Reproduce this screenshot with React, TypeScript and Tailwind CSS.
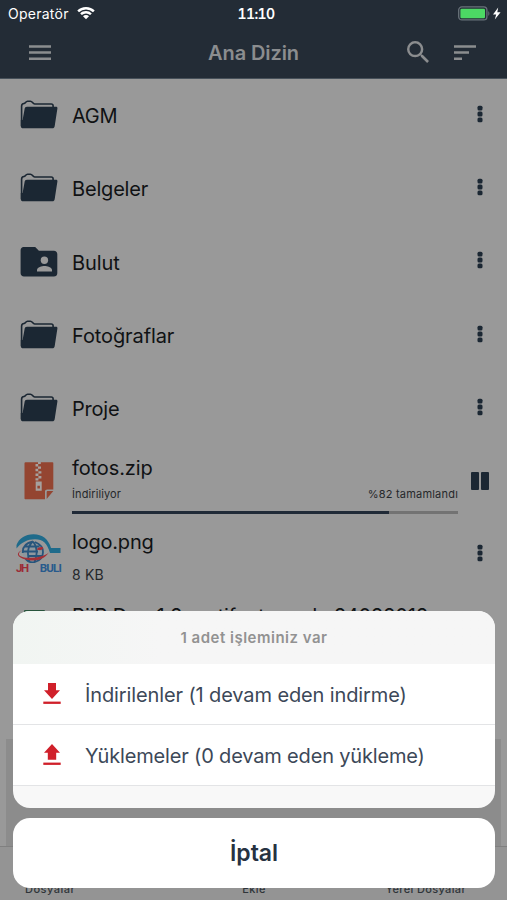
import type { ReactNode } from 'react';

type Folder = { name: string; shared?: boolean; tracking: string };

const FOLDERS: Folder[] = [
  { name: 'AGM', tracking: 'tracking-[-0.3px]' },
  { name: 'Belgeler', tracking: 'tracking-[-0.18px]' },
  { name: 'Bulut', shared: true, tracking: 'tracking-[-0.1px]' },
  { name: 'Fotoğraflar', tracking: 'tracking-[-0.1px]' },
  { name: 'Proje', tracking: 'tracking-[-0.2px]' },
];

function WifiIcon() {
  return (
    <svg width="18" height="13" viewBox="0 0 18 13" fill="#fff">
      <path d="M9 0C5.500 0 2.400 1.300.3 3.400L2 5.200A10 10 0 0 1 9 2.400a10 10 0 0 1 7 2.800l1.700-1.800C15.600 1.300 12.500 0 9 0Z" />
      <path d="M9 4.100c-2.300 0-4.300.8-5.800 2.300l1.700 1.700A6 6 0 0 1 9 6.500a6 6 0 0 1 4.100 1.600l1.700-1.700A8.300 8.300 0 0 0 9 4.100Z" />
      <path d="M9 8.100c-1.200 0-2.200.4-3 1.100l3 3.100 3-3.100c-.8-.7-1.800-1.100-3-1.100Z" />
    </svg>
  );
}

function BatteryIcon() {
  return (
    <svg width="44" height="16" viewBox="0 0 44 16">
      <rect x="0.700" y="0.900" width="28.200" height="13" rx="3.200" fill="none" stroke="#69727a" strokeWidth="1.300" />
      <rect x="2.400" y="2.700" width="24.600" height="9.500" rx="1.300" fill="#4cd964" />
      <path d="M30.300 5.200c1.400.4 1.400 4 0 4.500Z" fill="#69727a" />
      <path d="m40.200 1.500-5.200 7h3.200L36.800 13.500l5.800-7.300h-3.300Z" fill="#fff" />
    </svg>
  );
}

function FolderIcon() {
  return (
    <svg width="38" height="30" viewBox="0 0 38 30">
      <path
        d="M1.600 26V6.200c0-1.500.9-2.500 2.400-2.700C5.500 3.400 5.600 1.200 7.500 1.200h3c2 0 2.100 2.800 4.200 2.800h16.600c1.200 0 1.800.6 1.800 1.700V8"
        fill="none"
        stroke="#1b2733"
        strokeWidth="1.600"
      />
      <path d="M4.600 9c.2-1.500 1-2.200 2.300-2.200h29c1.200 0 1.700.6 1.500 1.700l-2.700 17.500c-.2 1.600-1 2.300-2.500 2.300H3.300C1.600 28.300.8 27.400.8 26V20h1.800Z" fill="#1b2733" />
    </svg>
  );
}

function SharedFolderIcon() {
  return (
    <svg width="38" height="30" viewBox="0 0 38 30">
      <path d="M3.500 0h11.700l3.700 3.700h15c2 0 3.400 1.400 3.400 3.300v19.300c0 2-1.400 3.300-3.400 3.300H4c-2 0-3.400-1.400-3.400-3.300V3.300C.6 1.400 1.900 0 3.500 0Z" fill="#1b2733" />
      <circle cx="24.400" cy="13.200" r="3.700" fill="#999" />
      <path d="M17 24.400v-1.600c0-2.600 5-3.900 7.500-3.900s7.500 1.300 7.500 3.900v1.600Z" fill="#999" />
    </svg>
  );
}

function ZipIcon() {
  return (
    <svg width="30" height="38" viewBox="0 0 30 38">
      <path d="M1.500.3h27c.5 0 .8.3.8.8v26.400h-6c-1.500 0-2.300.8-2.300 2.300v7.500H1.500c-.6 0-1-.3-1-1V1.200c0-.6.4-.9 1-.9Z" fill="#944531" />
      <path d="M22.700 37v-6.600c0-1 .3-1.300 1.300-1.300h5.300Z" fill="#944531" />
      <path
        d="M14 0h2.800v2H14ZM11.500 2h2.700v2.400h-2.700ZM14 4.400h3v2.400h-3ZM11.500 6.800h2.700v2.400h-2.700ZM14.400 9.200h3v2.400h-3ZM11.500 11.600h2.900V14h-2.900ZM14.400 14h3v2.400h-3ZM11.500 16.300h2.900v2.200h-2.900Z"
        fill="#a5a19f"
      />
      <path d="M11.700 19.500h6v9.300h-6ZM13.400 23.800v2.800h2.500v-2.800Z" fill="#a5a19f" fillRule="evenodd" />
    </svg>
  );
}

function LogoThumb() {
  return (
    <div className="h-[42px] w-[45px]">
      <svg width="45" height="29" viewBox="0 0 45 29">
        <path d="M.5 14.500V11C3 4.500 9 .3 17.500.3c9 0 15 5 17.500 13.700h9.500v5H34C31.500 9.500 27 5.200 19 5.200 11.500 5.200 5 8.500.5 14.500Z" fill="#1f6b8b" />
        <circle cx="17" cy="18" r="10.500" fill="#8e979e" />
        <g fill="none" stroke="#27557c" strokeWidth="1.800">
          <path d="M17 7.500C9 9 6.500 14 6.800 19M17 7.500c-5 4-6.500 12-3.500 20M17 7.500c4 4.500 5 13 1.500 20.500M19 8c5 2 8 6 8 10 0 4.500-3 8.500-8 10-3 .8-7 0-9.500-3M8.500 12.500h15M7 17.500h15M12 22h14" />
        </g>
        <path d="M20.500 15.500c2-2.500 5-3 6.500-2 .8 1-.5 2.300-3 2.700Z" fill="#a32f36" />
        <path d="M6.300 16C0 20 3 23.500 12 23.800c9 .2 18-1.800 21-5.500C28 26 20 27.500 12 26 1.500 24-1.500 19.500 6.300 16Z" fill="#a32f36" />
      </svg>
      <div className="flex justify-between font-['Roboto','Liberation_Sans',sans-serif] text-[11.500px] leading-[11px] font-bold">
        <span className="tracking-[-1.500px] text-[#9c2b36]">JH</span>
        <span className="tracking-[-0.8px] text-[#285a8c]">BULI</span>
      </div>
    </div>
  );
}

function MoreDots() {
  return (
    <svg width="6" height="18" viewBox="0 0 6 18" fill="#1b2733">
      <rect x="0.500" y="0.700" width="5" height="4.800" rx="1.500" />
      <rect x="0.500" y="6.600" width="5" height="4.800" rx="1.500" />
      <rect x="0.500" y="12.500" width="5" height="4.800" rx="1.500" />
    </svg>
  );
}

function TransferIcon({ up = false }: { up?: boolean }) {
  return (
    <svg width="18" height="22" viewBox="0 0 18 22" fill="#d0202a">
      {up ? <path d="M9 0 17 8.700h-3.800V15.800H4.800V8.700H1Z" /> : <path d="M5 0h8v7.300h4L9 16 1 7.300h4Z" />}
      <rect x="0.300" y="18.600" width="17.400" height="2.300" />
    </svg>
  );
}

function FolderRow({ folder }: { folder: Folder }) {
  return (
    <li className="flex h-[73.300px] shrink-0 items-center pr-[24px] pl-[20px]">
      <div className="mb-[1px]">{folder.shared ? <SharedFolderIcon /> : <FolderIcon />}</div>
      <span className={`ml-[14px] flex-1 pt-[1px] text-[20px] leading-6 ${folder.tracking}`}>{folder.name}</span>
      <div className="mb-[4px]">
        <MoreDots />
      </div>
    </li>
  );
}

function SheetAction({ icon, children }: { icon: ReactNode; children: ReactNode }) {
  return (
    <button className="flex h-[61px] w-full items-center border-b border-[#e3e4e6] bg-white pl-[30px] text-left text-[20px] text-[#3c4858]">
      {icon}
      {children}
    </button>
  );
}

export default function App() {
  return (
    <div className="relative flex h-[900px] w-[507px] flex-col overflow-hidden bg-[#999] font-['Inter','Liberation_Sans',sans-serif] text-[#101214]">
      <header className="h-[79px] shrink-0 border-b border-[#47515a] bg-[#232c36]">
        <div className="grid h-[27px] grid-cols-3 items-center pr-[5px] pl-[8px] text-white">
          <div className="flex items-center gap-[8px] text-[14px] tracking-[0.250px]">
            Operatör
            <WifiIcon />
          </div>
          <div className="pl-[2px] text-center text-[14px] font-semibold tracking-[-0.6px] tabular-nums">11:10</div>
          <div className="flex justify-end">
            <BatteryIcon />
          </div>
        </div>
        <div className="grid h-[51px] grid-cols-3 items-center pr-[31px] pl-[29px] text-[#8b8d8f]">
          <svg width="22" height="16" viewBox="0 0 22 16" fill="currentColor">
            <path d="M0 .3h22v2.400H0ZM0 6.300h22v2.400H0ZM0 12.600h22V15H0Z" />
          </svg>
          <h1 className="pl-[2px] text-center text-[20px] font-semibold tracking-[-0.1px] whitespace-nowrap">Ana Dizin</h1>
          <div className="flex items-center justify-end gap-[25px]">
            <svg width="22" height="22" viewBox="3 3 17.500 17.500" fill="currentColor" className="relative -top-px">
              <path d="M15.500 14h-.79l-.28-.27A6.470 6.470 0 0 0 16 9.500 6.500 6.500 0 1 0 9.500 16c1.610 0 3.090-.59 4.230-1.570l.27.28v.79l5 4.990L20.490 19l-4.990-5zm-6 0C7.010 14 5 11.990 5 9.500S7.010 5 9.500 5 14 7.010 14 9.500 11.990 14 9.500 14z" />
            </svg>
            <svg width="22" height="16" viewBox="0 0 22 16" fill="currentColor">
              <path d="M0 .3h22v2.400H0ZM0 6.300h15v2.400H0ZM0 12.600h8V15H0Z" />
            </svg>
          </div>
        </div>
      </header>

      <ul className="flex h-[660px] shrink-0 flex-col overflow-hidden">
        {FOLDERS.map((f) => (
          <FolderRow key={f.name} folder={f} />
        ))}
        <li className="flex h-[73.300px] shrink-0 pr-[18px] pl-[24px]">
          <div className="pt-[16.500px]">
            <ZipIcon />
          </div>
          <div className="ml-[18px] w-[386px] pt-[11px]">
            <div className="text-[20px] leading-6 tracking-[-0.1px]">fotos.zip</div>
            <div className="mt-[7px] flex justify-between text-[11px] leading-[14px] text-[#25282b]">
              <span className="tracking-[0.1px]">İndiriliyor</span>
              <span className="tracking-[0.2px]">%82 tamamlandı</span>
            </div>
            <div className="mt-[10px] h-[2.500px] bg-[#737373]">
              <div className="h-full w-[82%] bg-[#202a37]" />
            </div>
          </div>
          <div className="ml-auto flex gap-[2px] pt-[27px]">
            <div className="h-[18px] w-[8px] rounded-[1px] bg-[#1b2733]" />
            <div className="h-[18px] w-[8px] rounded-[1px] bg-[#1b2733]" />
          </div>
        </li>
        <li className="flex h-[73.300px] shrink-0 pr-[24px] pl-[16px]">
          <div className="pt-[15.500px]">
            <LogoThumb />
          </div>
          <div className="ml-[11px] flex-1 pt-[11px]">
            <div className="text-[20px] leading-6 tracking-[-0.2px]">logo.png</div>
            <div className="mt-[12px] text-[14px] leading-[18px] tracking-[0.2px] text-[#25282b]">8 KB</div>
          </div>
          <div className="pt-[25px]">
            <MoreDots />
          </div>
        </li>
        <li className="flex h-[73.300px] shrink-0 pl-[24px]">
          <div className="mt-[17.500px] h-[38px] w-[21px] rounded-t-[1px] bg-[#28543c]" />
          <div className="ml-[27px] pt-[12px] text-[20px] leading-6 tracking-[-0.080px] whitespace-nowrap">BiiR Don 1.2 sertifcatomada 24022012</div>
        </li>
      </ul>

      <div className="mx-[6px] h-[107px] shrink-0 bg-[#8c8c8c]" />
      <nav className="grid flex-1 grid-cols-3 items-end border-t border-[#808080] bg-[#949494] pr-[41px] pb-[4px] pl-[25px] text-[11px] leading-[14px] font-medium text-[#2f3439]">
        <span className="tracking-[0.5px]">Dosyalar</span>
        <span className="pl-[17px] text-center tracking-[0.4px]">Ekle</span>
        <span className="text-right tracking-[0.350px]">Yerel Dosyalar</span>
      </nav>

      {/* action sheet over the file list */}
      <div className="absolute inset-x-[13px] top-[611px] w-[482px]">
        <section className="h-[197px] overflow-hidden rounded-[17px] bg-[#f8f8f8]">
          <h2 className="flex h-[53px] items-center justify-center bg-gradient-to-r from-[#f1f5f2] via-[#f6f6f6] via-30% to-[#f6f6f6] pt-[2px] text-[15px] font-semibold tracking-[0.500px] text-[#929292]">
            1 adet işleminiz var
          </h2>
          <SheetAction icon={<TransferIcon />}>
            <span className="ml-[24px] pt-[2px] tracking-[-0.120px]">İndirilenler (1 devam eden indirme)</span>
          </SheetAction>
          <SheetAction icon={<TransferIcon up />}>
            <span className="ml-[24px] pt-[2px] tracking-[-0.170px]">Yüklemeler (0 devam eden yükleme)</span>
          </SheetAction>
        </section>
        <button className="mt-[10px] block h-[70px] w-full rounded-[17px] bg-white pt-[1px] text-center text-[23px] font-semibold text-[#263241]">
          İptal
        </button>
      </div>
    </div>
  );
}
